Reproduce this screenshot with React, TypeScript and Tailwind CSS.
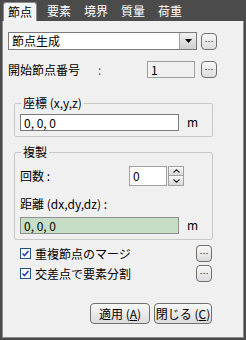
import React from "react";

const font = { fontFamily: '"Noto Sans CJK JP", "Liberation Sans", sans-serif' };

function DotsButton({ className = "" }: { className?: string }) {
  return (
    <button
      className={`w-[16px] h-[17px] rounded-[4px] border border-[#707070] bg-gradient-to-b from-[#f8f8f8] to-[#dcdcdc] text-[9px] leading-none text-black flex items-end justify-center pb-[3px] ${className}`}
    >
      …
    </button>
  );
}

function Check({ label }: { label: string }) {
  return (
    <label className="flex items-center gap-[4px] text-[12px] text-black">
      <span className="w-[11px] h-[11px] border border-[#1c5180] bg-white flex items-center justify-center">
        <svg width="9" height="9" viewBox="0 0 9 9">
          <path d="M1.5 4.5 L3.5 6.5 L7.5 2" stroke="#2a3fbf" strokeWidth="1.6" fill="none" />
        </svg>
      </span>
      {label}
    </label>
  );
}

export default function App() {
  const tabs = ["節点", "要素", "境界", "質量", "荷重"];
  return (
    <div className="w-[246px] h-[340px] bg-[#4b4b4b] flex flex-col" style={font}>
      {/* Tab strip */}
      <div className="h-[21px] flex items-end pl-[3px] gap-[7px] shrink-0">
        {tabs.map((t, i) =>
          i === 0 ? (
            <div
              key={t}
              className="h-[19px] px-[4px] bg-[#f4f4f4] border border-b-0 border-[#8c8c8c] rounded-t-[3px] text-[12px] leading-[18px] text-black"
            >
              {t}
            </div>
          ) : (
            <div key={t} className="h-[19px] px-[3px] text-[12px] leading-[18px] text-white">
              {t}
            </div>
          )
        )}
      </div>

      {/* Page */}
      <div className="flex-1 mx-[2px] mb-[2px] bg-[#f0f0f0] border border-t-0 border-[#8c8c8c] px-[5px] pt-[11px] text-[12px] text-black">
        <div className="flex items-center gap-[4px]">
          <div className="w-[189px] h-[18px] bg-white border border-[#7a7a7a] flex items-center">
            <span className="flex-1 pl-[3px] leading-none">節点生成</span>
            <span className="w-[17px] h-[16px] bg-gradient-to-b from-[#f2f2f2] to-[#cfcfcf] border-l border-[#a0a0a0] flex items-center justify-center">
              <svg width="7" height="4" viewBox="0 0 7 4">
                <path d="M0 0 H7 L3.5 4 Z" fill="#000" />
              </svg>
            </span>
          </div>
          <DotsButton />
        </div>

        <div className="flex items-center mt-[11px] h-[17px]">
          <span className="w-[90px]">開始節点番号</span>
          <span className="text-[#606060] w-[49px]">:</span>
          <div className="w-[48px] h-[17px] border border-[#a0a0a0] bg-[#f0f0f0] pl-[3px] leading-[15px] text-[#000]">1</div>
          <DotsButton className="ml-[6px]" />
        </div>

        <fieldset className="mt-[18px] ml-[6px] w-[199px] h-[41px] border border-[#c8c8c8] rounded-[2px] px-[5px] pb-[2px]">
          <legend className="px-[2px] ml-[1px] text-[12px] leading-[14px]">座標 (x,y,z)</legend>
          <div className="flex items-center mt-[3px]">
            <div className="w-[159px] h-[17px] bg-white border border-[#7a7a7a] pl-[3px] leading-[15px]">0, 0, 0</div>
            <span className="ml-[8px]">m</span>
          </div>
        </fieldset>

        <fieldset className="mt-[8px] ml-[6px] w-[199px] h-[95px] border border-[#c8c8c8] rounded-[2px] px-[5px]">
          <legend className="px-[2px] ml-[1px] text-[12px] leading-[14px]">複製</legend>
          <div className="flex items-center mt-[7px] h-[20px]">
            <span className="w-[109px]">回数 :</span>
            <div className="w-[38px] h-[20px] bg-white border border-[#a0a0a0] pl-[3px] leading-[18px]">0</div>
            <div className="flex flex-col ml-[1px]">
              <span className="w-[16px] h-[10px] border border-[#a0a0a0] bg-gradient-to-b from-[#f8f8f8] to-[#d8d8d8] flex items-center justify-center">
                <svg width="7" height="4" viewBox="0 0 7 4"><path d="M0.5 3.5 L3.5 0.8 L6.5 3.5" stroke="#222" strokeWidth="1.2" fill="none" /></svg>
              </span>
              <span className="w-[16px] h-[10px] border border-t-0 border-[#a0a0a0] bg-gradient-to-b from-[#f8f8f8] to-[#d8d8d8] flex items-center justify-center">
                <svg width="7" height="4" viewBox="0 0 7 4"><path d="M0.5 0.5 L3.5 3.2 L6.5 0.5" stroke="#222" strokeWidth="1.2" fill="none" /></svg>
              </span>
            </div>
          </div>
          <div className="mt-[11px] leading-[14px]">距離 (dx,dy,dz) :</div>
          <div className="flex items-center mt-[5px]">
            <div className="w-[159px] h-[17px] bg-[#c6dec6] border border-[#909090] pl-[3px] leading-[15px]">0, 0, 0</div>
            <span className="ml-[8px]">m</span>
          </div>
        </fieldset>

        <div className="ml-[12px] mr-[26px] mt-[5px] flex items-center justify-between h-[17px]">
          <Check label="重複節点のマージ" />
          <DotsButton />
        </div>
        <div className="ml-[12px] mr-[26px] mt-[3px] flex items-center justify-between h-[17px]">
          <Check label="交差点で要素分割" />
          <DotsButton />
        </div>

        <div className="flex justify-end gap-[4px] mr-[26px] mt-[21px]">
          <button className="w-[60px] h-[21px] rounded-[4px] border border-[#707070] bg-gradient-to-b from-[#f8f8f8] to-[#dcdcdc] text-[12px] leading-none">
            適用 (<span className="underline">A</span>)
          </button>
          <button className="w-[58px] h-[21px] rounded-[4px] border border-[#707070] bg-gradient-to-b from-[#f8f8f8] to-[#dcdcdc] text-[12px] leading-none">
            閉じる (<span className="underline">C</span>)
          </button>
        </div>
      </div>
    </div>
  );
}
